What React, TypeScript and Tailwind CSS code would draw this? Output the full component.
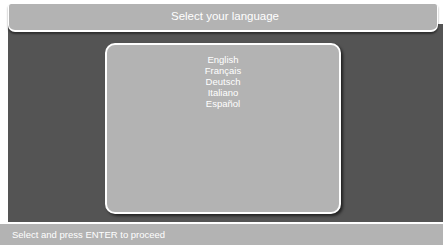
import React from "react";

const languages = ["English", "Français", "Deutsch", "Italiano", "Español"];

export default function App() {
  return (
    <div
      className="w-[443px] h-[245px] bg-white flex flex-col overflow-hidden"
      style={{ fontFamily: '"Liberation Sans", Arial, sans-serif' }}
    >
      <div className="flex-1 flex flex-col pl-[8px] pt-[4px]">
        {/* header */}
        <div className="relative z-10 mr-[5px] h-[28px] rounded-b-[7px] rounded-t-[3px] border-x-[1.5px] border-b-[2px] border-white bg-[#b3b3b3] shadow-[0_2px_2px_rgba(0,0,0,0.45)] flex items-center justify-center">
          <span className="text-[11.5px] text-white leading-none pb-[1px] pl-[4px]">Select your language</span>
        </div>

        {/* dark stage */}
        <div className="-mt-[8px] flex-1 bg-[#545454] flex pt-[19px] pb-[7px] pl-[97px]">
          <div className="w-[236px] h-[171px] rounded-[10px] border-[2px] border-white bg-[#b3b3b3] shadow-[2px_2px_3px_rgba(0,0,0,0.6)] flex flex-col items-center pt-[9px]">
            {languages.map((l) => (
              <div key={l} className="text-[9.5px] leading-[11px] text-white">
                {l}
              </div>
            ))}
          </div>
        </div>
      </div>

      {/* footer */}
      <div className="h-[23px] border-t-[2px] border-white bg-[#b3b3b3] flex items-center pl-[12px]">
        <span className="text-[9.5px] text-white leading-none">Select and press ENTER to proceed</span>
      </div>
    </div>
  );
}
